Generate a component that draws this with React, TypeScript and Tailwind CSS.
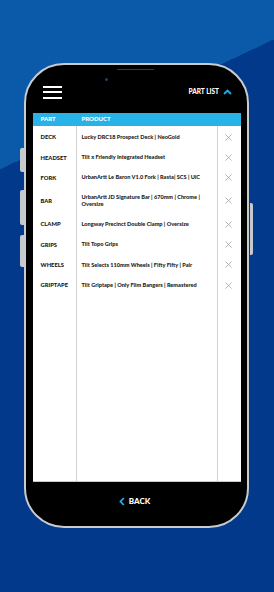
import React from 'react';

const parts: [string, string[]][] = [
  ['DECK', ['Lucky DRC18 Prospect Deck | NeoGold']],
  ['HEADSET', ['Tilt x Friendly Integrated Headset']],
  ['FORK', ['UrbanArtt Le Baron V1.0 Fork | Rasta| SCS | UiC']],
  ['BAR', ['UrbanArtt JD Signature Bar | 670mm | Chrome |', 'Oversize']],
  ['CLAMP', ['Longway Precinct Double Clamp | Oversize']],
  ['GRIPS', ['Tilt Topo Grips']],
  ['WHEELS', ['Tilt Selects 110mm Wheels | Fifty Fifty | Pair']],
  ['GRIPTAPE', ['Tilt Griptape | Only Film Bangers | Remastered']],
];

function CloseIcon() {
  return (
    <svg width="7" height="7" viewBox="0 0 7 7">
      <path d="M0.5 0.5L6.5 6.5M6.5 0.5L0.5 6.5" stroke="#a3a3a3" strokeWidth="0.8" fill="none" />
    </svg>
  );
}

export default function App() {
  return (
    <div className="w-[274px] h-[592px] overflow-hidden bg-[linear-gradient(154.6deg,#0b5aa9_153px,#02398b_153px)] pt-[63px] font-['Lato',sans-serif]">
      <div className="relative ml-[24px] w-[225px] h-[465px] rounded-[40px] border-[2.5px] border-[#c8cbcf] bg-black flex flex-col">
        {/* side buttons */}
        <div className="absolute -left-[6px] top-[83px] w-[3.5px] h-[24px] rounded-l-[2px] bg-[#c6cacf]" />
        <div className="absolute -left-[6px] top-[125px] w-[3.5px] h-[35px] rounded-l-[2px] bg-[#c6cacf]" />
        <div className="absolute -left-[6px] top-[170px] w-[3.5px] h-[32px] rounded-l-[2px] bg-[#c6cacf]" />
        <div className="absolute -right-[6px] top-[138px] w-[3.5px] h-[52px] rounded-r-[2px] bg-[#c6cacf]" />
        {/* speaker + camera */}
        <div className="absolute left-[91px] top-[3.5px] w-[37px] h-[1.5px] rounded-full bg-[#3a3a3a]" />
        <div className="absolute left-[78.5px] top-[12.5px] w-[3px] h-[3px] rounded-full bg-[#1f3f78]" />

        <div className="h-[47.5px] flex items-start justify-between pl-[16.5px] pr-[15px] pt-[20.5px]">
          <div className="flex flex-col gap-[3.8px] w-[19px]">
            <div className="h-[2px] bg-white" />
            <div className="h-[2px] bg-white" />
            <div className="h-[2px] bg-white" />
          </div>
          <div className="flex items-center gap-[4px] mt-[3px]">
            <span className="text-white font-black text-[6.5px] leading-none">PART LIST</span>
            <svg width="9" height="6" viewBox="0 0 9 6">
              <path d="M1 5L4.5 1.5L8 5" stroke="#2aa8e0" strokeWidth="1.8" fill="none" />
            </svg>
          </div>
        </div>

        <div className="px-[7px] pr-[6px]">
          <div className="h-[13px] bg-[#27b2e8] flex items-center text-white font-black text-[6px] leading-none">
            <div className="w-[44px] pl-[7.5px]">PART</div>
            <div className="pl-[4.5px]">PRODUCT</div>
          </div>
          <div className="h-[356px] bg-white border-b border-[#c9c9c9] flex flex-col">
            <div className="h-[1.5px] grid grid-cols-[44px_141px_21px]">
              <div className="border-r border-[#d2d2d2]" />
              <div className="border-r border-[#d2d2d2]" />
              <div />
            </div>
            {parts.map(([part, lines]) => (
              <div key={part} className="grid grid-cols-[44px_141px_21px] min-h-[20.3px]">
                <div className="border-r border-[#d2d2d2] flex items-center pl-[7.5px] text-[5.8px] font-black text-[#151515] leading-none">
                  {part}
                </div>
                <div className="border-r border-[#d2d2d2] flex flex-col justify-center py-[6.5px] pl-[4.5px] text-[5.6px] font-black text-[#222] leading-[6.6px]">
                  {lines.map((l) => (
                    <span key={l}>{l}</span>
                  ))}
                </div>
                <div className="flex items-center justify-center pr-[1px]">
                  <CloseIcon />
                </div>
              </div>
            ))}
            <div className="flex-1 grid grid-cols-[44px_141px_21px]">
              <div className="border-r border-[#d2d2d2]" />
              <div className="border-r border-[#d2d2d2]" />
              <div />
            </div>
          </div>
        </div>

        <div className="flex-1 flex items-center justify-center gap-[4px] pb-[5px] pr-[4px]">
          <svg width="6" height="9" viewBox="0 0 6 9">
            <path d="M4.8 1L1.5 4.5L4.8 8" stroke="#2aa8e0" strokeWidth="1.8" fill="none" />
          </svg>
          <span className="text-white font-black text-[8px] leading-none">BACK</span>
        </div>
      </div>
    </div>
  );
}
